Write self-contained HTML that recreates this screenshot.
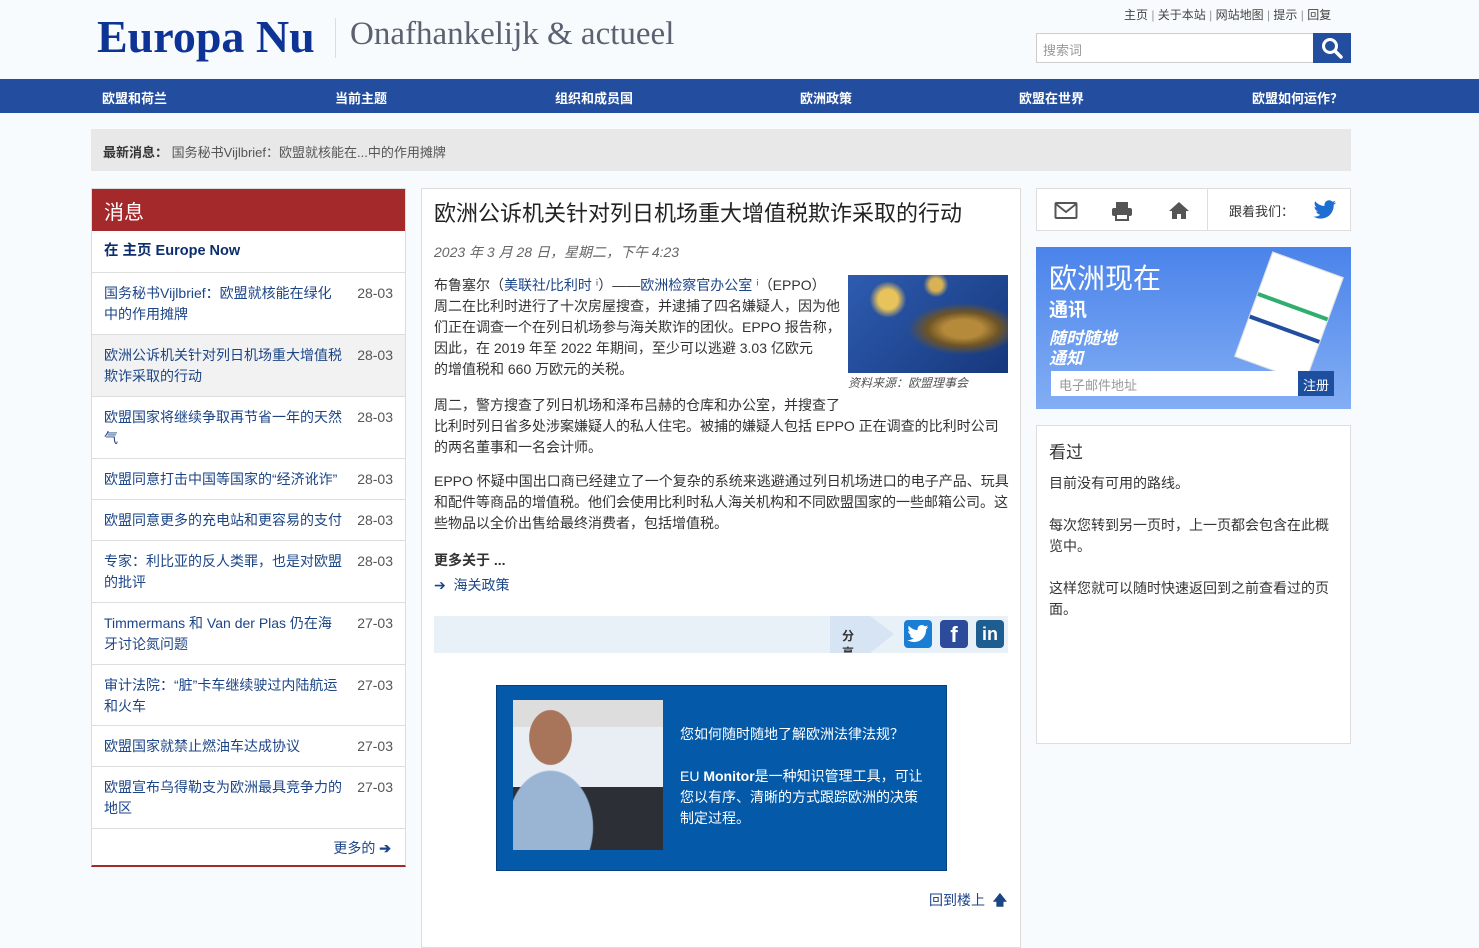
<!DOCTYPE html>
<html><head><meta charset="utf-8">
<style>
*{margin:0;padding:0;box-sizing:border-box}
body{width:1479px;height:931px;overflow:hidden;background:#f8fbfd;font-family:"Liberation Sans","Noto Sans CJK SC",sans-serif;font-size:14px;color:#333;position:relative}
.a{position:absolute}
a{color:#1c4587;text-decoration:none}
.nav{left:0;top:79px;width:1479px;height:34px;background:#234ea0}
.nav span{position:absolute;top:9px;color:#fff;font-weight:bold;font-size:13px}
.left{left:91px;top:188px;width:315px;height:679px;background:#fff;border:1px solid #ddd;border-bottom:2px solid #a4292b}
.left .hd{height:42px;background:#a4292b;color:#fff;font-size:20px;padding:7px 12px}
.li{border-bottom:1px solid #ddd;padding:10px 12px;line-height:21px;position:relative;color:#1c4587;font-size:14px}
.li .t{width:240px;display:block}
.li .d{position:absolute;right:12px;top:10px;color:#555}
.mid{left:421px;top:188px;width:600px;height:760px;background:#fff;border:1px solid #ddd}
.right1{left:1036px;top:188px;width:315px;height:43px;background:#fff;border:1px solid #ddd}
p.b{line-height:21px;font-size:14px;color:#333}
</style></head><body>
<div class="a" style="left:97px;top:10px;font-family:'Liberation Serif',serif;font-size:46px;font-weight:bold;color:#0d3494">Europa Nu</div>
<div class="a" style="left:335px;top:18px;width:1px;height:40px;background:#ddd"></div>
<div class="a" style="left:350px;top:16px;font-family:'Liberation Serif',serif;font-size:33px;color:#5a6270">Onafhankelijk &amp; actueel</div>
<div class="a" style="left:1124px;top:6px;font-size:12px;color:#444">主页 <span style="color:#999">|</span> 关于本站 <span style="color:#999">|</span> 网站地图 <span style="color:#999">|</span> 提示 <span style="color:#999">|</span> 回复</div>
<div class="a" style="left:1036px;top:33px;width:278px;height:30px;background:#fff;border:1px solid #ccc;font-size:13px;color:#999;padding:6px 6px">搜索词</div>
<div class="a" style="left:1313px;top:33px;width:38px;height:30px;background:#234ea0"><svg width="38" height="30"><circle cx="17" cy="13" r="6.5" fill="none" stroke="#fff" stroke-width="3"/><line x1="22" y1="18" x2="28" y2="24" stroke="#fff" stroke-width="3.5" stroke-linecap="round"/></svg></div>
<div class="a nav"><span style="left:102px">欧盟和荷兰</span><span style="left:335px">当前主题</span><span style="left:555px">组织和成员国</span><span style="left:800px">欧洲政策</span><span style="left:1019px">欧盟在世界</span><span style="left:1252px">欧盟如何运作？</span></div>
<div class="a" style="left:91px;top:129px;width:1260px;height:42px;background:#e8e8e8;padding:13px 12px;font-size:13px;color:#555"><b style="color:#333">最新消息：</b> 国务秘书Vijlbrief：欧盟就核能在...中的作用摊牌</div>

<div class="a left">
<div class="hd">消息</div>
<div class="li" style="font-weight:bold;color:#0d2e6e;height:42px;font-size:14.5px">在 主页 Europe Now</div>
<div class="li" style="height:62px"><span class="t">国务秘书Vijlbrief：欧盟就核能在绿化中的作用摊牌</span><span class="d">28-03</span></div>
<div class="li" style="height:62px;background:#f2f2f2"><span class="t">欧洲公诉机关针对列日机场重大增值税欺诈采取的行动</span><span class="d">28-03</span></div>
<div class="li" style="height:62px"><span class="t">欧盟国家将继续争取再节省一年的天然气</span><span class="d">28-03</span></div>
<div class="li" style="height:41px"><span class="t">欧盟同意打击中国等国家的“经济讹诈”</span><span class="d">28-03</span></div>
<div class="li" style="height:41px"><span class="t">欧盟同意更多的充电站和更容易的支付</span><span class="d">28-03</span></div>
<div class="li" style="height:62px"><span class="t">专家：利比亚的反人类罪，也是对欧盟的批评</span><span class="d">28-03</span></div>
<div class="li" style="height:62px"><span class="t">Timmermans 和 Van der Plas 仍在海牙讨论氮问题</span><span class="d">27-03</span></div>
<div class="li" style="height:61px"><span class="t">审计法院：“脏”卡车继续驶过内陆航运和火车</span><span class="d">27-03</span></div>
<div class="li" style="height:41px"><span class="t">欧盟国家就禁止燃油车达成协议</span><span class="d">27-03</span></div>
<div class="li" style="height:62px"><span class="t">欧盟宣布乌得勒支为欧洲最具竞争力的地区</span><span class="d">27-03</span></div>
<div style="text-align:right;padding:9px 14px;color:#1c4587">更多的 <b>➔</b></div>
</div>

<div class="a mid">
<div class="a" style="left:12px;top:7px;font-size:22px;color:#222">欧洲公诉机关针对列日机场重大增值税欺诈采取的行动</div>
<div class="a" style="left:12px;top:53px;font-size:14px;color:#666;font-style:italic">2023 年 3 月 28 日，星期二，下午 4:23</div>
<div class="a" style="left:426px;top:86px;width:160px;height:98px;background:radial-gradient(ellipse at 72% 55%,#b58a3a 0 12%,#6e5426 22%,transparent 34%),radial-gradient(circle at 25% 25%,#e8c25a 0 7%,transparent 13%),radial-gradient(circle at 55% 10%,#d8b255 0 5%,transparent 10%),linear-gradient(135deg,#2e5cb0,#16387c)"></div>
<div class="a" style="left:426px;top:185px;font-size:12px;color:#555;font-style:italic">资料来源：欧盟理事会</div>
<p class="b a" style="left:12px;top:86px;width:420px;white-space:nowrap">布鲁塞尔（<a>美联社/比利时 ⁱ</a>）——<a>欧洲检察官办公室 ⁱ</a>（EPPO）<br>周二在比利时进行了十次房屋搜查，并逮捕了四名嫌疑人，因为他<br>们正在调查一个在列日机场参与海关欺诈的团伙。EPPO 报告称，<br>因此，在 2019 年至 2022 年期间，至少可以逃避 3.03 亿欧元<br>的增值税和 660 万欧元的关税。</p>
<p class="b a" style="left:12px;top:206px;width:575px">周二，警方搜查了列日机场和泽布吕赫的仓库和办公室，并搜查了<br>比利时列日省多处涉案嫌疑人的私人住宅。被捕的嫌疑人包括 EPPO 正在调查的比利时公司的两名董事和一名会计师。</p>
<p class="b a" style="left:12px;top:282px;width:575px">EPPO 怀疑中国出口商已经建立了一个复杂的系统来逃避通过列日机场进口的电子产品、玩具和配件等商品的增值税。他们会使用比利时私人海关机构和不同欧盟国家的一些邮箱公司。这些物品以全价出售给最终消费者，包括增值税。</p>
<div class="a" style="left:12px;top:361px;font-weight:bold;font-size:14px">更多关于 ...</div>
<div class="a" style="left:12px;top:386px;color:#1c4587">➔ &nbsp;海关政策</div>
<div class="a" style="left:12px;top:427px;width:574px;height:37px;background:#e8f0f8"></div>
<div class="a" style="left:408px;top:427px;width:40px;height:37px;background:#d6e4f3;font-size:12px;font-weight:bold;padding:11px 12px;overflow:hidden">分享</div>
<div class="a" style="left:448px;top:427px;width:0;height:0;border-top:18px solid transparent;border-bottom:19px solid transparent;border-left:24px solid #d6e4f3"></div>
<div class="a" style="left:482px;top:431px;width:28px;height:28px;background:#1a7fd4;border-radius:4px"><svg width="28" height="28" viewBox="-3 -4 30 28"><path d="M23 2.5c-.8.4-1.7.6-2.6.7.9-.6 1.6-1.4 2-2.5-.9.5-1.9.9-2.9 1.1C18.6.9 17.4.3 16.1.3c-2.5 0-4.6 2-4.6 4.6 0 .4 0 .7.1 1C7.8 5.8 4.4 4 2.2 1.2c-.4.7-.6 1.5-.6 2.3 0 1.6.8 3 2 3.8-.8 0-1.5-.2-2.1-.6v.1c0 2.2 1.6 4.1 3.7 4.5-.4.1-.8.2-1.2.2-.3 0-.6 0-.9-.1.6 1.8 2.3 3.2 4.3 3.2-1.6 1.2-3.6 2-5.7 2H.6c2 1.3 4.5 2 7 2 8.5 0 13.1-7 13.1-13.1v-.6c.9-.6 1.7-1.4 2.3-2.4z" fill="#fff"/></svg></div>
<div class="a" style="left:518px;top:431px;width:28px;height:28px;background:#2c4b9a;border-radius:4px;color:#fff;text-align:center;font-size:22px;font-weight:bold;line-height:30px">f</div>
<div class="a" style="left:554px;top:431px;width:28px;height:28px;background:#1d5d8f;border-radius:4px;color:#fff;text-align:center;font-size:18px;font-weight:bold;line-height:28px">in</div>
<div class="a" style="left:74px;top:496px;width:451px;height:186px;background:#045aa8;border:1px solid #03407c"></div>
<div class="a" style="left:91px;top:511px;width:150px;height:150px;background:radial-gradient(ellipse 35px 45px at 25% 25%,#a8755a 0 60%,transparent 62%),radial-gradient(ellipse 60px 80px at 25% 85%,#9ab4d4 0 70%,transparent 72%),linear-gradient(180deg,#ddd 0 18%,#e9eef5 18% 58%,#2c2f36 58%)"></div>
<div class="a" style="left:258px;top:535px;width:250px;font-size:14px;line-height:21px;color:#fff">您如何随时随地了解欧洲法律法规？<br><br>EU <b>Monitor</b>是一种知识管理工具，可让您以有序、清晰的方式跟踪欧洲的决策制定过程。</div>
<div class="a" style="left:507px;top:701px;color:#1c4587">回到楼上 &nbsp;<b>🡅</b></div>
</div>

<div class="a right1">
<svg class="a" style="left:17px;top:12px" width="24" height="20"><rect x="1.5" y="2" width="21" height="15" rx="1" fill="none" stroke="#555" stroke-width="2"/><path d="M2 3 L12 11 L22 3" fill="none" stroke="#555" stroke-width="2"/></svg>
<svg class="a" style="left:74px;top:11px" width="22" height="22"><rect x="5" y="2" width="12" height="6" fill="#555"/><rect x="1" y="8" width="20" height="8" rx="2" fill="#555"/><rect x="5" y="14" width="12" height="6" fill="#fff" stroke="#555" stroke-width="2"/></svg>
<svg class="a" style="left:131px;top:11px" width="22" height="20"><path d="M11 2 L1 11 L4 11 L4 19 L9 19 L9 14 L13 14 L13 19 L18 19 L18 11 L21 11 Z" fill="#555"/></svg>
<div class="a" style="left:170px;top:0;width:1px;height:42px;background:#ddd"></div>
<div class="a" style="left:192px;top:12px;font-size:13px;color:#333">跟着我们：</div>
<svg class="a" style="left:276px;top:11px" width="24" height="20" viewBox="0 0 24 20"><path d="M23 2.5c-.8.4-1.7.6-2.6.7.9-.6 1.6-1.4 2-2.5-.9.5-1.9.9-2.9 1.1C18.6.9 17.4.3 16.1.3c-2.5 0-4.6 2-4.6 4.6 0 .4 0 .7.1 1C7.8 5.8 4.4 4 2.2 1.2c-.4.7-.6 1.5-.6 2.3 0 1.6.8 3 2 3.8-.8 0-1.5-.2-2.1-.6v.1c0 2.2 1.6 4.1 3.7 4.5-.4.1-.8.2-1.2.2-.3 0-.6 0-.9-.1.6 1.8 2.3 3.2 4.3 3.2-1.6 1.2-3.6 2-5.7 2H.6c2 1.3 4.5 2 7 2 8.5 0 13.1-7 13.1-13.1v-.6c.9-.6 1.7-1.4 2.3-2.4z" fill="#1c6ed1"/></svg>
</div>
<div class="a" style="left:1036px;top:247px;width:315px;height:162px;background:linear-gradient(180deg,#4a83ea,#83aef4);overflow:hidden">
<div class="a" style="left:13px;top:10px;font-size:28px;color:#fff">欧洲现在</div>
<div class="a" style="left:13px;top:48px;font-size:19px;color:#fff;font-weight:bold">通讯</div>
<div class="a" style="left:13px;top:82px;font-size:17px;color:#fff;font-weight:bold;font-style:italic;line-height:20px">随时随地<br>通知</div>
<div class="a" style="left:215px;top:14px;width:76px;height:112px;background:#fff;transform:rotate(20deg);border:1px solid #ddd"><div style="margin-top:42px;height:4px;background:#2fae6f"></div><div style="margin-top:20px;height:4px;background:#234ea0"></div></div>
<div class="a" style="left:15px;top:124px;width:248px;height:25px;background:#fff;font-size:13px;color:#999;padding:4px 8px">电子邮件地址</div>
<div class="a" style="left:262px;top:124px;width:36px;height:25px;background:#1d4f9e;color:#fff;font-size:13px;padding:4px 5px">注册</div>
</div>
<div class="a" style="left:1036px;top:425px;width:315px;height:319px;background:#fff;border:1px solid #ddd;padding:12px 12px">
<div style="font-size:17px;color:#333;margin-bottom:10px">看过</div>
<p class="b">目前没有可用的路线。<br><br>每次您转到另一页时，上一页都会包含在此概览中。<br><br>这样您就可以随时快速返回到之前查看过的页面。</p>
</div>
</body></html>
